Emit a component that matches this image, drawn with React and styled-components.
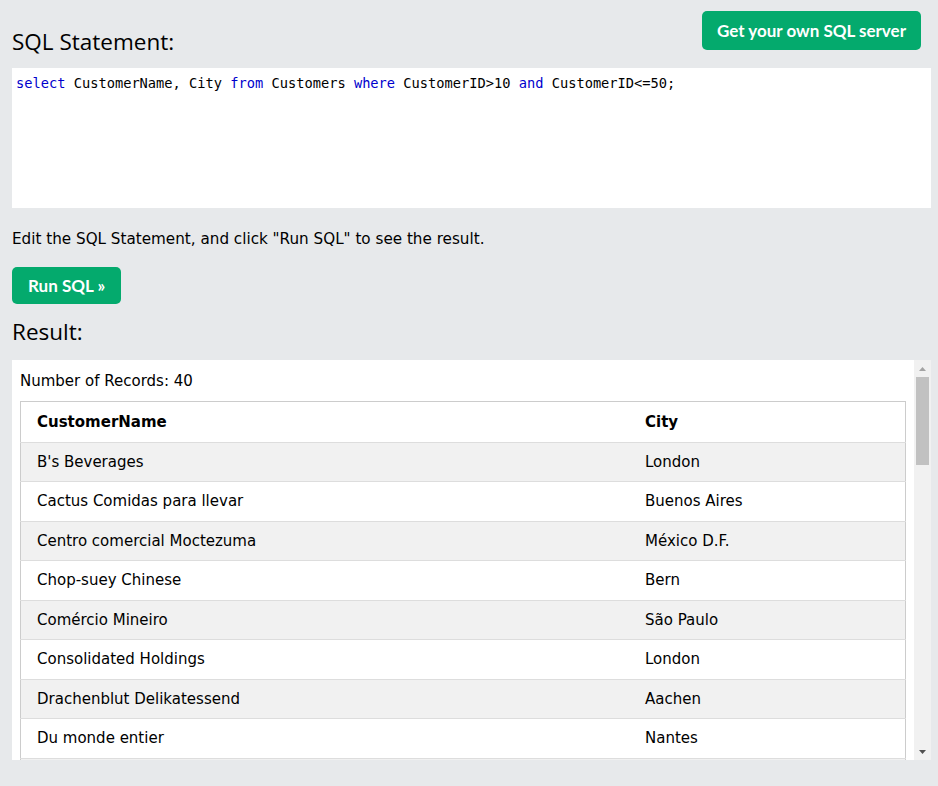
import styled, { createGlobalStyle } from "styled-components";

const GlobalStyle = createGlobalStyle`
  body {
    margin: 0;
    background: #e7e9eb;
    font-family: "DejaVu Sans", Verdana, sans-serif;
    color: #000;
  }
`;

const Page = styled.div`
  padding: 11px 7px 0 12px;
  height: 786px;
  box-sizing: border-box;
  overflow: hidden;
`;

const TopBar = styled.div`
  display: flex;
  justify-content: space-between;
  align-items: flex-start;
`;

const Heading = styled.h2`
  margin: ${(p) => p.$margin || "0"};
  font-family: "Open Sans", "Noto Sans", sans-serif;
  font-weight: 400;
  font-size: 22.5px;
  line-height: 1.2;
  color: #000;
`;

const GreenButton = styled.button`
  display: block;
  background: #04aa6d;
  color: #fff;
  border: none;
  border-radius: 5px;
  font-family: Lato, "Open Sans", sans-serif;
  font-weight: 700;
  font-size: 17px;
  height: ${(p) => p.$h}px;
  padding: 0 ${(p) => p.$px}px;
  margin: ${(p) => p.$margin || "0"};
  cursor: pointer;
`;

const Editor = styled.div`
  background: #fff;
  height: 140px;
  margin-top: 13px;
  padding: 5px 4px;
  box-sizing: border-box;
  font-family: "DejaVu Sans Mono", "Liberation Mono", monospace;
  font-size: 13.7px;
  line-height: 20px;
  white-space: pre;
`;

const Kw = styled.span`
  color: #0000cd;
`;

const Hint = styled.p`
  margin: 20px 0 17px;
  font-size: 15.2px;
  line-height: 22px;
`;

const ResultBox = styled.div`
  display: flex;
  background: #fff;
  height: 400px;
  margin-top: 15px;
`;

const ResultBody = styled.div`
  flex: 1;
  overflow: hidden;
  padding: 10px 8px 0 8px;
`;

const Count = styled.div`
  font-size: 15px;
  line-height: 22px;
  margin-bottom: 9px;
`;

const Table = styled.table`
  width: 100%;
  border-collapse: collapse;
  border: 1px solid #ccc;
  font-size: 15px;
`;

const Row = styled.tr`
  background: ${(p) => (p.$striped ? "#f1f1f1" : "#fff")};
  border-bottom: 1px solid #ddd;
`;

const Cell = styled.td`
  padding: 8px 8px 8px ${(p) => (p.$first ? "16px" : "8px")};
  line-height: 1.5;
  text-align: left;
  vertical-align: top;
  width: ${(p) => p.$w || "auto"};
`;

const HeadCell = styled(Cell).attrs({ as: "th" })`
  font-weight: 700;
  padding-top: 9px;
`;

const ScrollBar = styled.div`
  width: 17px;
  background: #f1f1f1;
  display: flex;
  flex-direction: column;
  align-items: center;
`;

const Arrow = styled.div`
  height: 17px;
  width: 17px;
  display: flex;
  align-items: center;
  justify-content: center;
`;

const Track = styled.div`
  flex: 1;
  width: 100%;
  display: flex;
  justify-content: center;
`;

const Thumb = styled.div`
  width: 13px;
  height: 88px;
  background: #c1c1c1;
`;

const rows = [
  ["B's Beverages", "London"],
  ["Cactus Comidas para llevar", "Buenos Aires"],
  ["Centro comercial Moctezuma", "México D.F."],
  ["Chop-suey Chinese", "Bern"],
  ["Comércio Mineiro", "São Paulo"],
  ["Consolidated Holdings", "London"],
  ["Drachenblut Delikatessend", "Aachen"],
  ["Du monde entier", "Nantes"],
  ["Eastern Connection", "London"],
];

export default function App() {
  return (
    <>
      <GlobalStyle />
      <Page>
        <TopBar>
          <Heading $margin="17px 0 0">SQL Statement:</Heading>
          <GreenButton $h={39} $px={15} $margin="0 10px 0 0">
            Get your own SQL server
          </GreenButton>
        </TopBar>
        <Editor>
          <Kw>select</Kw> CustomerName, City <Kw>from</Kw> Customers{" "}
          <Kw>where</Kw> CustomerID&gt;10 <Kw>and</Kw> CustomerID&lt;=50;
        </Editor>
        <Hint>Edit the SQL Statement, and click "Run SQL" to see the result.</Hint>
        <GreenButton $h={37} $px={16}>Run SQL »</GreenButton>
        <Heading $margin="14px 0 0">Result:</Heading>
        <ResultBox>
          <ResultBody>
            <Count>Number of Records: 40</Count>
            <Table>
              <thead>
                <Row>
                  <HeadCell $first $w="592px">CustomerName</HeadCell>
                  <HeadCell>City</HeadCell>
                </Row>
              </thead>
              <tbody>
                {rows.map(([name, city], i) => (
                  <Row key={name} $striped={i % 2 === 0}>
                    <Cell $first>{name}</Cell>
                    <Cell>{city}</Cell>
                  </Row>
                ))}
              </tbody>
            </Table>
          </ResultBody>
          <ScrollBar>
            <Arrow>
              <svg width="7" height="4" viewBox="0 0 7 4">
                <path d="M0 4 L3.5 0 L7 4 Z" fill="#a3a3a3" />
              </svg>
            </Arrow>
            <Track>
              <Thumb />
            </Track>
            <Arrow>
              <svg width="7" height="4" viewBox="0 0 7 4">
                <path d="M0 0 L3.5 4 L7 0 Z" fill="#505050" />
              </svg>
            </Arrow>
          </ScrollBar>
        </ResultBox>
      </Page>
    </>
  );
}
